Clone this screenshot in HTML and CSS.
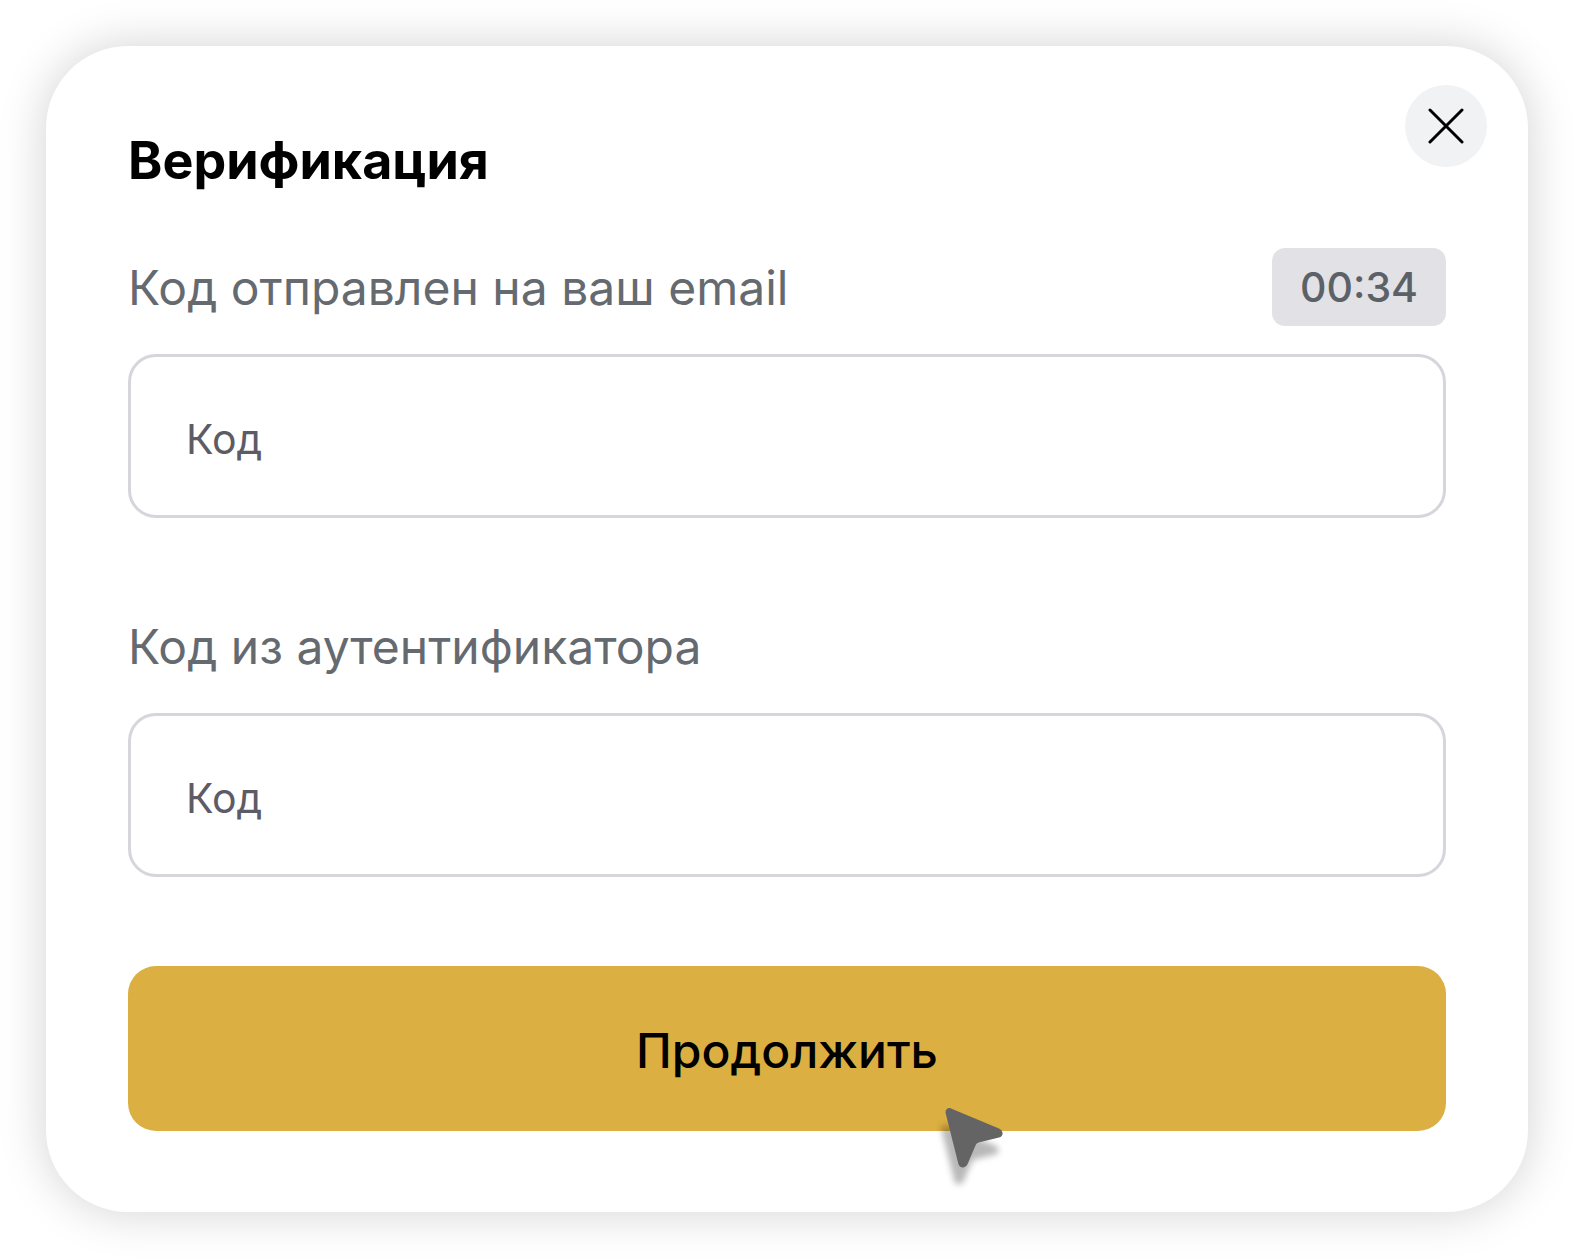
FILE: index.html
```html
<!DOCTYPE html>
<html lang="ru">
<head>
  <meta charset="utf-8">
  <meta name="viewport" content="width=device-width, initial-scale=1">
  <title>Верификация</title>
  <link rel="stylesheet" href="styles.css">
</head>
<body>
  <main class="dialog" role="dialog" aria-labelledby="dialog-title">
    <button class="close" type="button" aria-label="Закрыть">
      <svg class="close-icon" viewBox="0 0 36 36" aria-hidden="true">
        <path d="M2 2 34 34M34 2 2 34"/>
      </svg>
    </button>
    <h1 class="title" id="dialog-title">Верификация</h1>
    <form class="form">
      <div class="field">
        <div class="field-head">
          <label class="label" for="email-code">Код отправлен на ваш email</label>
          <time class="timer">00:34</time>
        </div>
        <input class="input" id="email-code" type="text" placeholder="Код">
      </div>
      <div class="field">
        <div class="field-head">
          <label class="label" for="auth-code">Код из аутентификатора</label>
        </div>
        <input class="input" id="auth-code" type="text" placeholder="Код">
      </div>
      <div class="actions">
        <button class="submit" type="button">Продолжить</button>
        <svg class="cursor" viewBox="0 0 58 60" aria-hidden="true">
          <path d="M6 .4 54 20.6C59 23 58.600 28.600 54 29.600L34.500 34.300C32.500 34.800 31.300 35.500 30.500 37.400L22.600 56C20.600 60.600 14.600 60.600 13.400 56L.7 5.600C-.2 2 2.600-.8 6 .4Z"/>
        </svg>
      </div>
    </form>
  </main>
</body>
</html>
```
FILE: styles.css
```css
* {
  box-sizing: border-box;
}

body {
  margin: 0;
  padding: 46px;
  background: #fff;
  font-family: Inter, "Liberation Sans", sans-serif;
}

.dialog {
  position: relative;
  padding: 83px 82px 81px;
  border-radius: 82px;
  background: #fff;
  box-shadow: 0 0 48px rgba(0, 0, 0, 0.18);
}

.close {
  position: absolute;
  top: 39px;
  right: 41px;
  display: flex;
  align-items: center;
  justify-content: center;
  width: 82px;
  height: 82px;
  padding: 0;
  border: 0;
  border-radius: 50%;
  background: #f1f2f4;
}

.close-icon {
  width: 36px;
  height: 36px;
  fill: none;
  stroke: #000;
  stroke-width: 3;
  stroke-linecap: round;
}

.title {
  margin: 0 0 55px;
  font-size: 52px;
  font-weight: 700;
  line-height: 64px;
  color: #000;
}

.form {
  display: flex;
  flex-direction: column;
  gap: 89px;
}

.field {
  display: flex;
  flex-direction: column;
  gap: 28px;
}

.field-head {
  display: flex;
  align-items: center;
  justify-content: space-between;
  min-height: 78px;
}

.label {
  padding-top: 2px;
  font-size: 48px;
  line-height: 58px;
  color: #656a70;
}

.timer {
  padding: 0 28px;
  border-radius: 13px;
  background: #e2e1e6;
  font-size: 41px;
  font-weight: 500;
  line-height: 78px;
  color: #5b6167;
}

.input {
  width: 100%;
  height: 164px;
  padding: 5px 55px 0;
  border: 3px solid #d5d5dc;
  border-radius: 28px;
  background: #fff;
  font: inherit;
  font-size: 41px;
  color: #5d5b66;
}

.input::placeholder {
  color: #5d5b66;
  opacity: 1;
}

.actions {
  position: relative;
}

.submit {
  display: block;
  width: 100%;
  height: 165px;
  padding: 4px 0 0;
  border: 0;
  border-radius: 28px;
  background: #dcaf42;
  font: inherit;
  font-size: 48px;
  font-weight: 500;
  color: #000;
}

.cursor {
  position: absolute;
  top: 142px;
  left: calc(50% + 158px);
  width: 58px;
  height: 60px;
  overflow: visible;
  fill: #646464;
  filter: drop-shadow(-4px 17px 3px rgba(0, 0, 0, 0.28));
  pointer-events: none;
}
```
